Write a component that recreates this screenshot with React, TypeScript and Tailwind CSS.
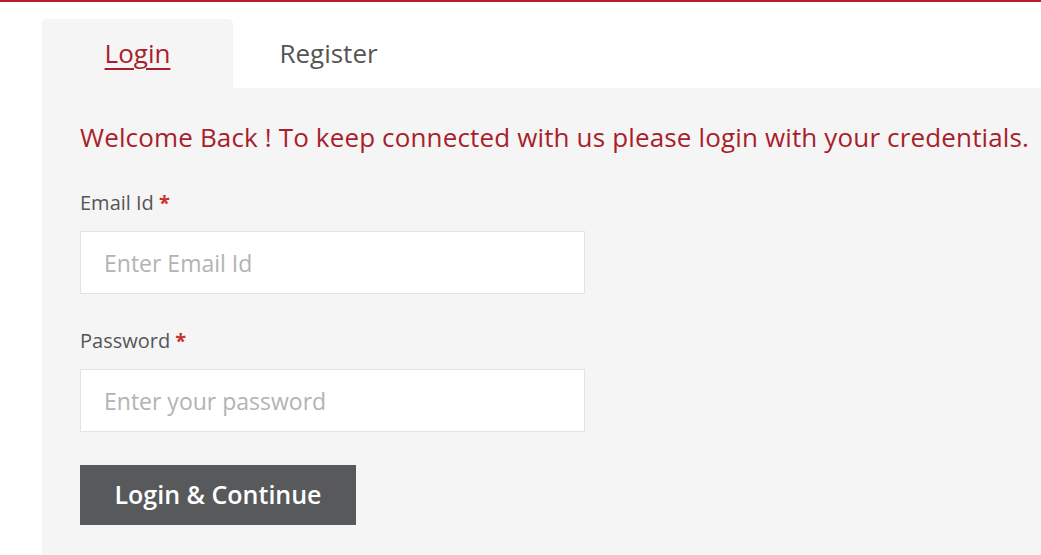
import React from 'react';

const font = { fontFamily: '"Open Sans", "Noto Sans", sans-serif' };

export default function App() {
  return (
    <div className="min-h-[555px] bg-white border-t-2 border-[#b3212e] overflow-hidden" style={font}>
      <div className="pl-[42px] pt-[17px]">
        {/* Tabs */}
        <div className="flex">
          <button className="w-[191px] h-[69px] bg-[#f5f5f5] rounded-t-[5px] text-[26px] text-[#a91e2c] underline underline-offset-[5px] decoration-[1.5px]">
            Login
          </button>
          <button className="w-[191px] h-[69px] text-[26px] text-[#555]">Register</button>
        </div>

        {/* Panel */}
        <div className="bg-[#f5f5f5] pl-[38px] pt-[30px] pb-[30px] min-h-[467px]">
          <p className="text-[26px] tracking-[0.15px] leading-[38px] text-[#a91e2c] whitespace-nowrap">
            Welcome Back ! To keep connected with us please login with your credentials.
          </p>

          <form className="mt-[34px] w-[505px]" onSubmit={(e) => e.preventDefault()}>
            <label className="block text-[20px] leading-[26px] text-[#555]">
              Email Id <span className="text-[#c9302c] font-bold">*</span>
            </label>
            <input
              type="email"
              placeholder="Enter Email Id"
              className="mt-[15px] w-full h-[63px] bg-white border border-[#e3e3e3] px-[23px] text-[23px] text-[#333] placeholder:text-[#b3b3b3] outline-none"
            />

            <label className="block mt-[34px] text-[20px] leading-[26px] text-[#555]">
              Password <span className="text-[#c9302c] font-bold">*</span>
            </label>
            <input
              type="password"
              placeholder="Enter your password"
              className="mt-[15px] w-full h-[63px] bg-white border border-[#e3e3e3] px-[23px] text-[23px] text-[#333] placeholder:text-[#b3b3b3] outline-none"
            />

            <button
              type="submit"
              className="mt-[33px] w-[276px] h-[60px] bg-[#58595b] text-white text-[25px] font-semibold"
            >
              Login &amp; Continue
            </button>
          </form>
        </div>
      </div>
    </div>
  );
}
